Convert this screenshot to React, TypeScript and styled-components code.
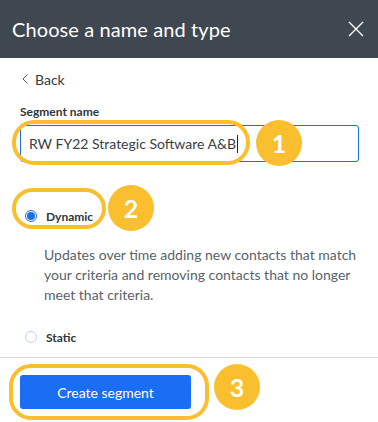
import styled, { createGlobalStyle } from "styled-components";

const GlobalStyle = createGlobalStyle`
  html, body {
    margin: 0;
    padding: 0;
    background: #fff;
  }
  body {
    font-family: "Lato", "Liberation Sans", sans-serif;
    -webkit-font-smoothing: antialiased;
  }
`;

const Panel = styled.div`
  width: 378px;
  height: 422px;
  background: #fff;
  overflow: hidden;
  display: flex;
  flex-direction: column;
`;

const Header = styled.header`
  height: 58px;
  flex-shrink: 0;
  background: #3f4750;
  display: flex;
  align-items: center;
  justify-content: space-between;
  padding: 0 14px 0 12px;
`;

const Title = styled.h1`
  margin: 0;
  font-size: 20px;
  font-weight: 400;
  color: #fff;
  letter-spacing: 0.1px;
`;

const CloseButton = styled.button`
  width: 16px;
  height: 16px;
  padding: 0;
  border: none;
  background: none;
  display: flex;
  cursor: pointer;
`;

const Body = styled.div`
  padding: 13px 19px 0 20px;
  flex: 1;
`;

const BackLink = styled.a`
  display: flex;
  align-items: center;
  gap: 7px;
  margin-left: 2px;
  height: 16px;
  font-size: 14px;
  color: #333a42;
  text-decoration: none;
`;

const Label = styled.label`
  display: block;
  margin-top: 17px;
  font-size: 12px;
  font-weight: 700;
  color: #2f353b;
`;

const FieldWrap = styled.div`
  position: relative;
  margin-top: 6px;
`;

const Input = styled.div`
  box-sizing: border-box;
  height: 37px;
  border: 1px solid #1a6ee6;
  border-radius: 3px;
  padding: 0 8px;
  display: flex;
  align-items: center;
  font-size: 14px;
  color: #3a4047;
`;

const Caret = styled.span`
  display: inline-block;
  width: 1px;
  height: 18px;
  background: #222;
  margin-left: 1px;
`;

const Ring = styled.span<{ $l: number; $t: number; $w: number; $h: number }>`
  position: absolute;
  left: ${({ $l }) => $l}px;
  top: ${({ $t }) => $t}px;
  width: ${({ $w }) => $w}px;
  height: ${({ $h }) => $h}px;
  box-sizing: border-box;
  border: 4px solid #f9bf2e;
  border-radius: 22px;
  pointer-events: none;
`;

const Badge = styled.span<{ $l: number; $t: number }>`
  position: absolute;
  left: ${({ $l }) => $l}px;
  top: ${({ $t }) => $t}px;
  width: 46px;
  height: 46px;
  border-radius: 50%;
  background: #f9bf2e;
  color: #fff;
  font-size: 25px;
  font-weight: 700;
  display: flex;
  align-items: center;
  justify-content: center;
`;

const Options = styled.div`
  margin-top: 43px;
  display: flex;
  flex-direction: column;
`;

const OptionRow = styled.div`
  position: relative;
  display: flex;
  align-items: center;
  gap: 9px;
  height: 22px;
  padding-left: 5px;
`;

const Radio = styled.span<{ $checked?: boolean }>`
  box-sizing: border-box;
  width: 12px;
  height: 12px;
  border-radius: 50%;
  border: 1px solid ${({ $checked }) => ($checked ? "#1a6ee6" : "#b8d2f3")};
  display: flex;
  align-items: center;
  justify-content: center;

  &::after {
    content: "";
    width: 8px;
    height: 8px;
    border-radius: 50%;
    background: ${({ $checked }) => ($checked ? "#1a6ee6" : "transparent")};
  }
`;

const OptionLabel = styled.span`
  font-size: 12px;
  font-weight: 700;
  color: #2f353b;
`;

const Description = styled.p`
  margin: 18px 0 0 24px;
  font-size: 14px;
  line-height: 20px;
  color: #5a626b;
`;

const StaticRow = styled(OptionRow)`
  margin-top: 21px;
`;

const Divider = styled.hr`
  margin: 0;
  border: none;
  border-top: 1px solid #dcdcdc;
`;

const Footer = styled.div`
  padding: 17px 20px 13px;
`;

const ButtonWrap = styled.div`
  position: relative;
  width: 171px;
`;

const PrimaryButton = styled.button`
  width: 171px;
  height: 34px;
  border: none;
  border-radius: 3px;
  background: #1a6ef3;
  color: #fff;
  font-family: inherit;
  font-size: 14px;
  cursor: pointer;
`;

export default function App() {
  return (
    <>
      <GlobalStyle />
      <Panel>
        <Header>
          <Title>Choose a name and type</Title>
          <CloseButton aria-label="Close">
            <svg width="16" height="16" viewBox="0 0 16 16" fill="none" stroke="#fff" strokeWidth="1.4">
              <path d="M1 1 L15 15 M15 1 L1 15" />
            </svg>
          </CloseButton>
        </Header>
        <Body>
          <BackLink href="#">
            <svg width="6" height="10" viewBox="0 0 6 10" fill="none" stroke="#555" strokeWidth="1">
              <path d="M5.5 0.5 L1 5 L5.5 9.5" />
            </svg>
            Back
          </BackLink>
          <Label>Segment name</Label>
          <FieldWrap>
            <Input>
              RW FY22 Strategic Software A&amp;B
              <Caret />
            </Input>
            <Ring $l={-8} $t={-5} $w={238} $h={45} />
            <Badge $l={236} $t={-5}>1</Badge>
          </FieldWrap>
          <Options>
            <OptionRow>
              <Radio $checked />
              <OptionLabel>Dynamic</OptionLabel>
              <Ring $l={-8} $t={-17} $w={94} $h={41} />
              <Badge $l={88} $t={-20}>2</Badge>
            </OptionRow>
            <Description>
              Updates over time adding new contacts that match your criteria and removing contacts that no
              longer meet that criteria.
            </Description>
            <StaticRow>
              <Radio />
              <OptionLabel>Static</OptionLabel>
            </StaticRow>
          </Options>
        </Body>
        <Divider />
        <Footer>
          <ButtonWrap>
            <PrimaryButton>Create segment</PrimaryButton>
            <Ring $l={-11} $t={-11} $w={200} $h={56} />
            <Badge $l={194} $t={-11}>3</Badge>
          </ButtonWrap>
        </Footer>
      </Panel>
    </>
  );
}
